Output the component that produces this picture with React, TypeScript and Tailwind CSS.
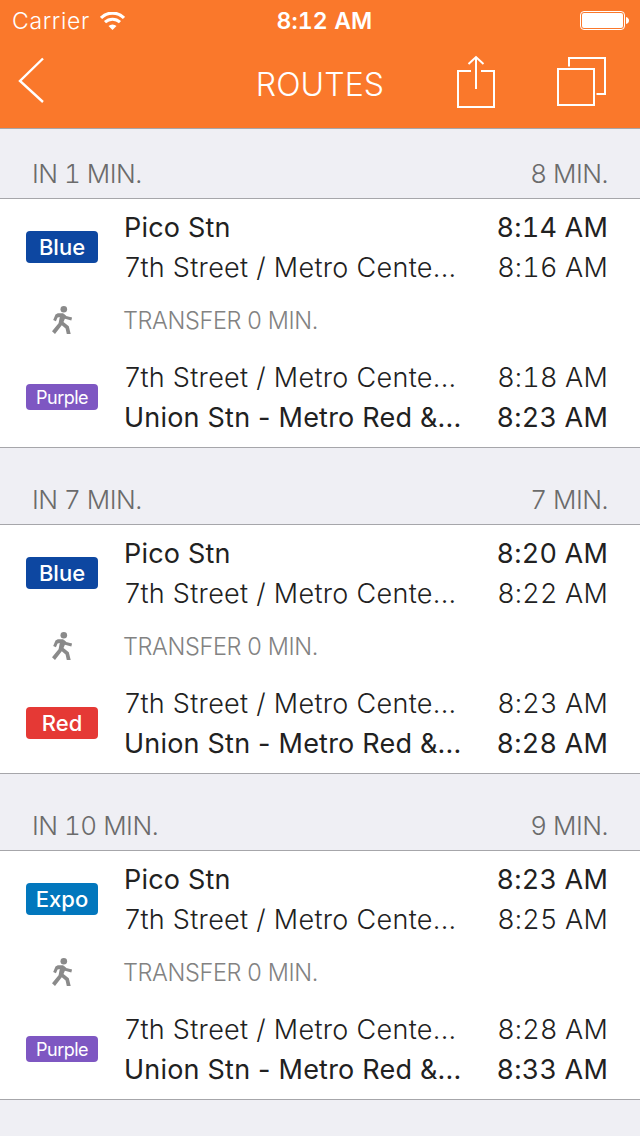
type Line = { name: string; className: string };
type Route = {
  departsIn: string;
  duration: string;
  lines: [Line, Line];
  times: [string, string, string, string];
};

const blue: Line = { name: 'Blue', className: 'h-8 bg-[#0d47a1] text-[22px] font-medium' };
const purple: Line = { name: 'Purple', className: 'h-[26px] bg-[#7e57c2] text-[18px] font-normal tracking-[-0.55px]' };
const red: Line = { name: 'Red', className: 'h-8 bg-[#e53935] text-[22px] font-medium' };
const expo: Line = { name: 'Expo', className: 'h-8 bg-[#0277bd] text-[22px] font-medium' };

const routes: Route[] = [
  { departsIn: 'IN 1 MIN.', duration: '8 MIN.', lines: [blue, purple], times: ['8:14 AM', '8:16 AM', '8:18 AM', '8:23 AM'] },
  { departsIn: 'IN 7 MIN.', duration: '7 MIN.', lines: [blue, red], times: ['8:20 AM', '8:22 AM', '8:23 AM', '8:28 AM'] },
  { departsIn: 'IN 10 MIN.', duration: '9 MIN.', lines: [expo, purple], times: ['8:23 AM', '8:25 AM', '8:28 AM', '8:33 AM'] },
];

function Badge({ line }: { line: Line }) {
  return (
    <div className="flex w-[98px] shrink-0 items-center pl-[26px]">
      <div className={`flex w-[72px] items-center justify-center rounded-[4px] text-white ${line.className}`}>{line.name}</div>
    </div>
  );
}

function Stop({ name, time, strong }: { name: string; time: string; strong?: boolean }) {
  return (
    <div className={`flex h-10 items-center justify-between pt-[2px] leading-10 ${strong ? 'font-normal' : 'font-light'}`}>
      <span className={`whitespace-nowrap ${strong ? 'tracking-[0.21px]' : 'pl-px tracking-[0.3px]'}`}>{name}</span>
      <span className="whitespace-nowrap tracking-[0.2px] tabular-nums">{time}</span>
    </div>
  );
}

function Walker() {
  return (
    <svg width="22" height="30" viewBox="0 0 22 30" fill="none" stroke="#8a8a8a" className="mb-[5px] ml-[51px]">
      <circle cx="12.8" cy="4.2" r="3.3" fill="#8a8a8a" stroke="none" />
      <path d="M6.8 8.3 L12.300 8.3 L14.200 13 L12.500 17 L17.8 21.200 L19.7 29 H15.8 L14.6 23.500 L10.8 20.3 L4 28.9 L1 26.3 L7.6 18.3 L8.8 12 L6.6 12.6 L4.9 16.2 L2.200 15 L4.500 9.6 Z" fill="#8a8a8a" stroke="none" />
      <path d="M11.800 9.8 L14.700 12.4 L20.7 14" strokeWidth="3" />
    </svg>
  );
}

function RouteSection({ route }: { route: Route }) {
  const [t1, t2, t3, t4] = route.times;
  return (
    <section>
      <div className="flex h-[50px] items-center justify-between border-b border-[#a6a6aa] pr-8 pl-8 text-[26px] font-light tracking-[-0.5px] text-[#6b6b6b] tabular-nums">
        <span>{route.departsIn}</span>
        <span>{route.duration}</span>
      </div>
      <div className="h-[249px] border-b border-[#a6a6aa] bg-white pt-2 text-[27px] text-[#212121]">
        <div className="flex h-20">
          <Badge line={route.lines[0]} />
          <div className="flex-1 pr-8 pl-[26px]">
            <Stop name="Pico Stn" time={t1} strong />
            <Stop name="7th Street / Metro Cente..." time={t2} />
          </div>
        </div>
        <div className="flex h-[70px] items-center">
          <div className="w-[123px]"><Walker /></div>
          <span className="mb-[3px] text-[23.5px] font-light tracking-[-0.37px] text-[#828282]">TRANSFER 0 MIN.</span>
        </div>
        <div className="flex h-20">
          <Badge line={route.lines[1]} />
          <div className="flex-1 pr-8 pl-[26px]">
            <Stop name="7th Street / Metro Cente..." time={t3} />
            <Stop name="Union Stn - Metro Red &..." time={t4} strong />
          </div>
        </div>
      </div>
    </section>
  );
}

export default function App() {
  return (
    <div className="flex h-[1136px] w-[640px] flex-col overflow-hidden bg-[#efeff4] font-[Inter,sans-serif]">
      <header className="h-[129px] shrink-0 border-b border-[#a6a6aa] bg-[#fa782b] text-white">
        <div className="grid h-10 grid-cols-3 items-center">
          <div className="flex items-center gap-[10px] pt-[2px] pl-3 text-[23px] font-[350] tracking-[0.65px]">
            <span>Carrier</span>
            <svg width="25" height="19" viewBox="0 0 25 19" fill="none" stroke="white">
              <path d="M1 6 A16 16 0 0 1 24 6" strokeWidth="3.2" />
              <path d="M5 10.2 A10.800 10.800 0 0 1 20 10.2" strokeWidth="3" />
              <path d="M8.500 14 A5.8 5.8 0 0 1 16.500 14 L12.500 18 Z" fill="white" stroke="none" />
            </svg>
          </div>
          <div className="pt-[2px] pl-[9px] text-center text-[23px] font-semibold tracking-[0.15px] tabular-nums">8:12 AM</div>
          <div className="flex justify-end pt-[2px] pr-[10px]">
            <svg width="50" height="20" viewBox="0 0 50 20" fill="none">
              <rect x="0.5" y="0.5" width="44" height="18" rx="3.5" stroke="white" />
              <rect x="2" y="2" width="41" height="15" rx="2" fill="white" />
              <path d="M46 6 Q49 7 49 9.5 Q49 12 46 13 Z" fill="white" />
            </svg>
          </div>
        </div>
        <div className="grid h-[88px] grid-cols-3 items-start">
          <svg width="50" height="88" viewBox="0 0 50 88" fill="none" stroke="white" strokeWidth="2.4">
            <path d="M43 18.5 L20 41 L43 62" />
          </svg>
          <h1 className="pt-[21px] text-center text-[32px] leading-[48px] font-[350] tracking-[0.1px]">ROUTES</h1>
          <svg width="213" height="88" viewBox="427 40 213 88" fill="none" stroke="white" strokeWidth="2">
            <path d="M471 71 H458 V107 H494 V71 H481" />
            <path d="M476 89 V57 M468.5 64 L476 57 L483.5 64" />
            <rect x="558" y="69" width="36" height="36" />
            <path d="M569 66.500 V58 H605 V94 H596.500" />
          </svg>
        </div>
      </header>
      <main className="flex flex-col gap-[27px] pt-5">
        {routes.map((r) => (
          <RouteSection key={r.departsIn} route={r} />
        ))}
      </main>
    </div>
  );
}
